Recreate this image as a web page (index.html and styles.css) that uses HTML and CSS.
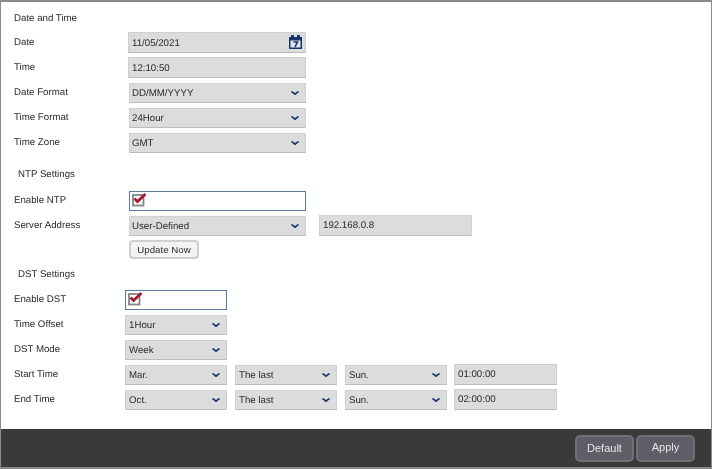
FILE: index.html
```html
<!doctype html>
<html>
    <head>
        <title>Date and Time</title>
        <link rel="stylesheet" href="styles.css">
    </head>

    <body>
    <div class="page">
        <div class="content">
            <div class="title">Date and Time</div>
            <div class="row">
                <span class="label">Date</span>
                <div class="field wide date-field">11/05/2021
                    <svg class="calendar" width="13" height="14" viewBox="0 0 13 14">
                        <path fill="#1b3468" d="M0 2h2V1a1 1 0 0 1 3 0v1h3V1a1 1 0 0 1 3 0v1h2v12H0z"/>
                        <rect x="1.5" y="5.5" width="10" height="7" fill="#dfe5ee"/>
                        <path fill="none" stroke="#1b3468" stroke-width="1.6" d="M4.5 7h4L6 12"/>
                    </svg>
                </div>
            </div>
            <div class="row">
                <span class="label">Time</span>
                <div class="field wide date-field">12:10:50</div>
            </div>
            <div class="row">
                <span class="label">Date Format</span>
                <div class="field wide select">DD/MM/YYYY<i class="arrow"></i></div>
            </div>
            <div class="row">
                <span class="label">Time Format</span>
                <div class="field wide select">24Hour<i class="arrow"></i></div>
            </div>
            <div class="row">
                <span class="label">Time Zone</span>
                <div class="field wide select">GMT<i class="arrow"></i></div>
            </div>

            <div class="title sub ntp-title">NTP Settings</div>
            <div class="row">
                <span class="label">Enable NTP</span>
                <div class="check-field wide">
                    <svg class="check" width="15" height="15" viewBox="0 0 15 15">
                        <rect x="1" y="3" width="10.5" height="10.5" fill="#fff" stroke="#858585" stroke-width="1.8"/>
                        <path fill="none" stroke="#a5182f" stroke-width="2.7" d="M2.5 6.5l3 3L13.5 2"/>
                    </svg>
                </div>
            </div>
            <div class="row">
                <span class="label">Server Address</span>
                <div class="field wide select">User-Defined<i class="arrow"></i></div>
                <div class="field address">192.168.0.8</div>
            </div>
            <div class="row">
                <span class="label"></span>
                <button class="update-button">Update Now</button>
            </div>

            <div class="title sub dst-title">DST Settings</div>
            <div class="row dst">
                <span class="label">Enable DST</span>
                <div class="check-field small">
                    <svg class="check" width="15" height="15" viewBox="0 0 15 15">
                        <rect x="1" y="3" width="10.5" height="10.5" fill="#fff" stroke="#858585" stroke-width="1.8"/>
                        <path fill="none" stroke="#a5182f" stroke-width="2.7" d="M2.5 6.5l3 3L13.5 2"/>
                    </svg>
                </div>
            </div>
            <div class="row dst">
                <span class="label">Time Offset</span>
                <div class="field small select">1Hour<i class="arrow"></i></div>
            </div>
            <div class="row dst">
                <span class="label">DST Mode</span>
                <div class="field small select">Week<i class="arrow"></i></div>
            </div>
            <div class="row dst">
                <span class="label">Start Time</span>
                <div class="field small select">Mar.<i class="arrow"></i></div>
                <div class="field small select">The last<i class="arrow"></i></div>
                <div class="field small select">Sun.<i class="arrow"></i></div>
                <div class="field small tall">01:00:00</div>
            </div>
            <div class="row dst">
                <span class="label">End Time</span>
                <div class="field small select">Oct.<i class="arrow"></i></div>
                <div class="field small select">The last<i class="arrow"></i></div>
                <div class="field small select">Sun.<i class="arrow"></i></div>
                <div class="field small tall">02:00:00</div>
            </div>
        </div>

        <div class="footer">
            <button class="footer-button">Default</button>
            <button class="footer-button apply">Apply</button>
        </div>
    </div>
    </body>
</html>
```

FILE: styles.css
```css
html, body {
    margin: 0;
    height: 100%;
}
body {
    font-family: "Liberation Sans", Arial, sans-serif;
    font-size: 9.7px;
    text-rendering: geometricPrecision;
    color: #2b2b2b;
    background: white;
}
.page {
    display: flex;
    flex-direction: column;
    box-sizing: border-box;
    height: 469px;
    border: 1px solid #8a8a8a;
    border-width: 2px 1px 2px 1px;
    filter: blur(0.4px);
}
.content {
    flex: 1;
    padding: 9px 0 0 13px;
}
.title {
    height: 16px;
    line-height: 16px;
    margin-bottom: 3px;
}
.sub {
    padding-left: 4px;
}
.ntp-title {
    margin-top: 12px;
    margin-bottom: 5px;
}
.dst-title {
    margin-top: 4px;
    margin-bottom: 4px;
}
.row {
    display: flex;
    align-items: center;
    gap: 8px;
    height: 25px;
}
.label {
    width: 115px;
    margin-top: -1px;
    margin-right: -8px;
}
.dst .label {
    width: 111px;
}
.field {
    display: flex;
    align-items: center;
    justify-content: space-between;
    box-sizing: border-box;
    height: 20px;
    padding: 1px 3px 0 3px;
    background: #dcdcdc;
    border: 1px solid #d0d0d0;
    border-bottom-color: #bcbcbc;
}
.wide {
    width: 177px;
}
.wide.select {
    padding-left: 2px;
}
.small {
    width: 102px;
}
.date-field {
    height: 21px;
    width: 178px;
    margin-left: -1px;
}
.tall {
    height: 21px;
    margin-top: -1px;
    margin-left: -1px;
}
.address {
    width: 153px;
    height: 21px;
    margin-left: 5px;
    margin-top: -1px;
}
.row .tall:last-child {
    width: 103px;
}
.calendar {
    margin-top: -2px;
}
.arrow {
    display: block;
    width: 4px;
    height: 4px;
    margin: -3px 4px 0 0;
    border: solid #1b3468;
    border-width: 0 2px 2px 0;
    transform: scaleY(0.7) rotate(45deg);
}
.check-field {
    display: flex;
    align-items: center;
    box-sizing: border-box;
    height: 20px;
    padding-left: 2px;
    background: white;
    border: 1px solid #5b7a9c;
}
.check {
    margin-top: -3px;
}
.update-button {
    box-sizing: border-box;
    width: 70px;
    height: 19px;
    margin-top: -2px;
    padding: 0;
    font: inherit;
    color: #2b2b2b;
    background: #f3f3f3;
    border: 2px solid #cfcfcf;
    border-radius: 4px;
}
.footer {
    display: flex;
    justify-content: flex-end;
    align-items: center;
    gap: 2px;
    height: 38px;
    padding-right: 16px;
    background: #3a3a3a;
}
.footer-button {
    box-sizing: border-box;
    width: 59px;
    height: 27px;
    padding: 0;
    font-family: inherit;
    font-size: 11px;
    color: #e6e6e6;
    background: #5e5e68;
    border: 2px solid #6f6f74;
    border-radius: 5px;
}
.apply {
    padding-bottom: 3px;
}
```
